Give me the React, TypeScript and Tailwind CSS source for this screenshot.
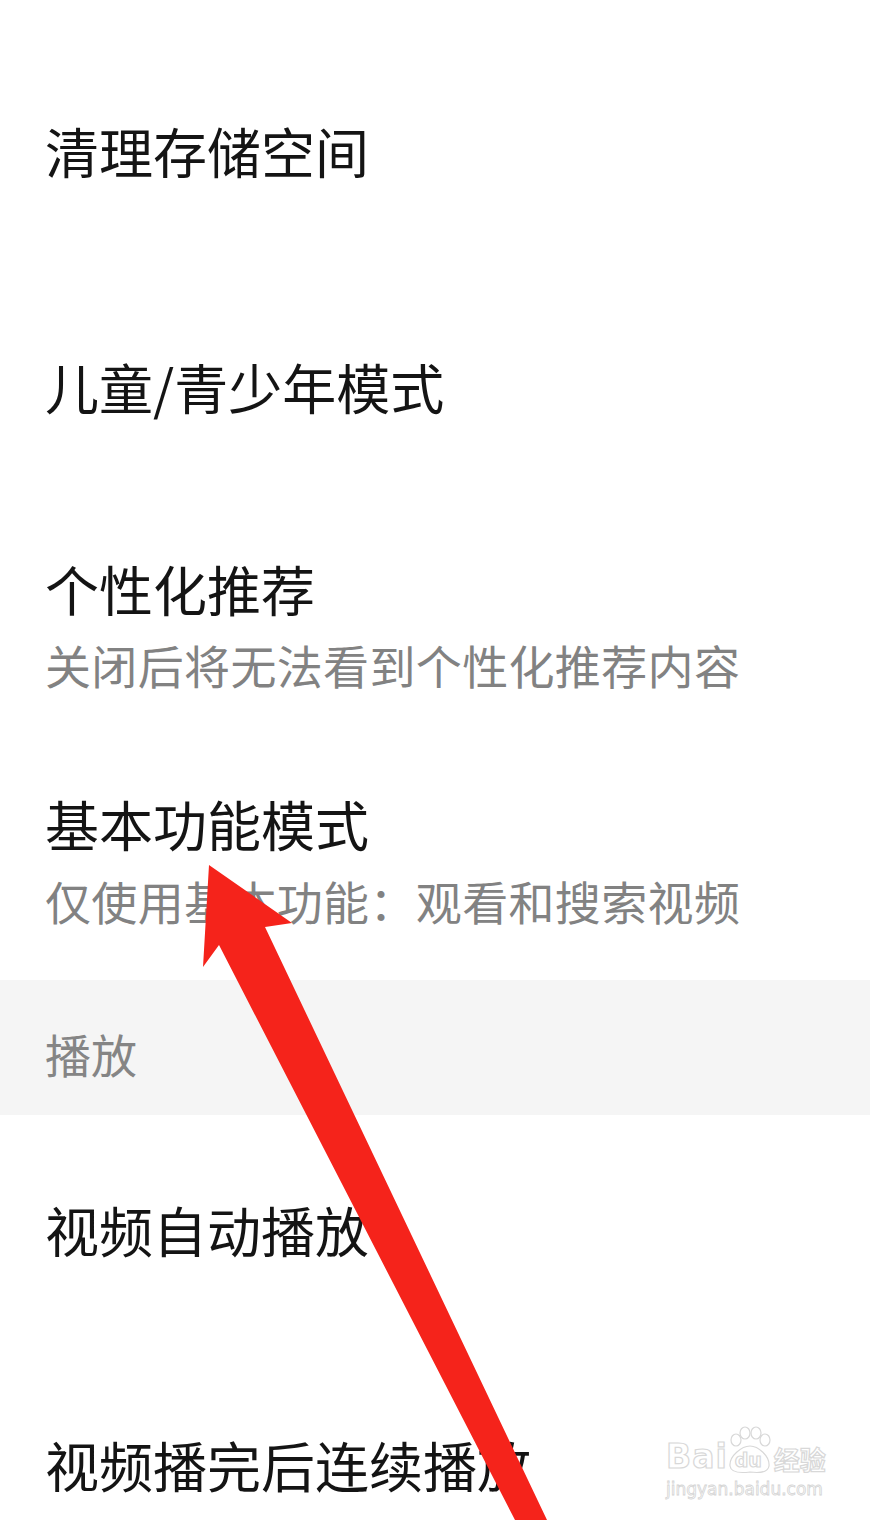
import React from "react";

const font = { fontFamily: '"Noto Sans CJK SC", "Noto Sans", sans-serif' };

function Title({ children, className = "" }: { children: React.ReactNode; className?: string }) {
  return (
    <div className={`pl-[45px] text-[54px] leading-[60px] text-[#141414] whitespace-nowrap ${className}`}>{children}</div>
  );
}

function Sub({ children, className = "" }: { children: React.ReactNode; className?: string }) {
  return (
    <div className={`pl-[45px] text-[46px] leading-[52px] tracking-[0.35px] text-[#828282] whitespace-nowrap ${className}`}>{children}</div>
  );
}

function Watermark() {
  const stroke = "[-webkit-text-stroke:1.2px_#d8d8d8]";
  return (
    <div className="absolute left-[666px] top-[1424px] w-[160px] h-[80px] pointer-events-none">
      <div className="flex items-end h-[50px]">
        <span
          className={`text-[33px] leading-[34px] font-bold text-white ${stroke}`}
          style={{ fontFamily: '"DejaVu Sans", sans-serif', letterSpacing: "1px" }}
        >
          Bai
        </span>
        <div className="relative w-[44px] h-[48px]">
          <svg width="44" height="48" viewBox="0 0 44 48" className="absolute left-0 top-0">
            <g fill="white" stroke="#d8d8d8" strokeWidth="1.2">
              <ellipse cx="8" cy="14" rx="5" ry="6" />
              <ellipse cx="17" cy="7" rx="5" ry="6" />
              <ellipse cx="28" cy="7" rx="5" ry="6" />
              <ellipse cx="37" cy="14" rx="5" ry="6" />
              <path d="M22 20 C 30 20, 42 30, 41 40 C 40 47, 30 47, 22 46 C 14 47, 3 47, 2 40 C 1 30, 14 20, 22 20 Z" />
            </g>
          </svg>
          <span
            className={`absolute left-[7px] top-[24px] text-[19px] leading-[20px] font-bold text-white ${stroke}`}
            style={{ fontFamily: '"DejaVu Sans", sans-serif' }}
          >
            du
          </span>
        </div>
        <span
          className={`ml-[2px] text-[26px] leading-[30px] font-bold text-white ${stroke}`}
          style={font}
        >
          经验
        </span>
      </div>
      <div
        className={`mt-[6px] text-[17px] leading-[18px] text-white [-webkit-text-stroke:0.8px_#d4d4d4]`}
        style={{ fontFamily: '"DejaVu Sans", sans-serif' }}
      >
        jingyan.baidu.com
      </div>
    </div>
  );
}

export default function App() {
  return (
    <div className="relative w-[870px] h-[1520px] overflow-hidden bg-white" style={font}>
      <div className="flex flex-col">
        <Title className="pt-[121px]">清理存储空间</Title>
        <Title className="mt-[176px]">儿童/青少年模式</Title>
        <Title className="mt-[142px]">个性化推荐</Title>
        <Sub className="mt-[19px]">关闭后将无法看到个性化推荐内容</Sub>
        <Title className="mt-[104px]">基本功能模式</Title>
        <Sub className="mt-[20px]">仅使用基本功能：观看和搜索视频</Sub>
        <div className="mt-[54px] h-[135px] bg-[#f5f5f5] pt-[47px]">
          <div className="pl-[45px] text-[46px] leading-[52px] text-[#858585]">播放</div>
        </div>
        <Title className="mt-[85px]">视频自动播放</Title>
        <Title className="mt-[175px]">视频播完后连续播放</Title>
      </div>

      <svg
        className="absolute left-0 top-0 pointer-events-none"
        width="870"
        height="1520"
        viewBox="0 0 870 1520"
      >
        <polygon
          points="209,865 292,923 265,927 547,1520 515,1520 219,945 203,967"
          fill="#f5231b"
        />
      </svg>

      <Watermark />
    </div>
  );
}
